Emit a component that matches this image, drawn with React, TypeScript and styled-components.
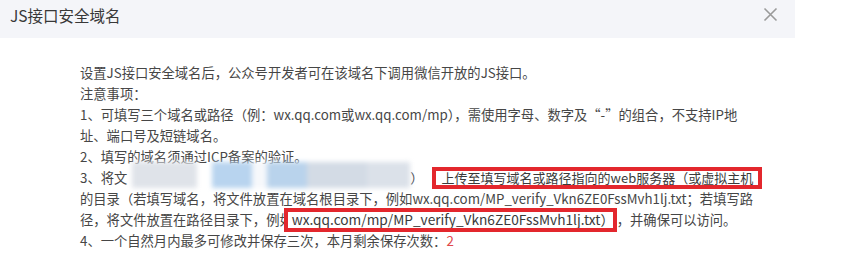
import {FC} from 'react';
import styled, {createGlobalStyle} from 'styled-components';

const GlobalStyle = createGlobalStyle`
	body {
		margin: 0;
		background: #fff;
		font-family: "Noto Sans CJK SC", "Noto Sans", sans-serif;
		color: #464646;
	}
`;

interface BoxProps {
	$width: number;
	$height: number;
	$size: number;
	$pad: number;
	$shift: number;
}

interface BlobProps {
	$w: number;
	$color: string;
}

const noticeLines = [
	'设置JS接口安全域名后，公众号开发者可在该域名下调用微信开放的JS接口。',
	'注意事项：',
	'1、可填写三个域名或路径（例：wx.qq.com或wx.qq.com/mp），需使用字母、数字及“-”的组合，不支持IP地',
	'址、端口号及短链域名。',
	'2、填写的域名须通过ICP备案的验证。',
];

// blurred filename area of item 3 (masked in the original screenshot)
const blobs = [
	{w: 5, color: 'transparent'},
	{w: 65, color: '#dfe3e9'},
	{w: 15, color: 'transparent'},
	{w: 40, color: '#b8d4ef'},
	{w: 15, color: '#f6f8fb'},
	{w: 40, color: '#b9d3ec'},
	{w: 60, color: '#d3dbe5'},
	{w: 43, color: '#dbe1e9'},
];

const App: FC = () => {
	return (
		<>
			<GlobalStyle />
			<Dialog>
				<Header>
					<Title>JS接口安全域名</Title>
					<CloseButton aria-label="关闭">
						<svg width="15" height="15" viewBox="0 0 15 15">
							<path
								d="M1.5 1.5 L13.5 13.5 M13.5 1.5 L1.5 13.5"
								stroke="#9a9a9a"
								strokeWidth="1.6"
								fill="none"
							/>
						</svg>
					</CloseButton>
				</Header>
				<Body>
					{noticeLines.map((line) => (
						<Line key={line}>{line}</Line>
					))}
					<Line>
						3、将文
						<BlurPatch>
							{blobs.map((b, i) => (
								<Blob key={i} $w={b.w} $color={b.color} />
							))}
						</BlurPatch>
						）
						<MarkBox $width={330} $height={22} $size={13} $pad={6} $shift={8}>
							上传至填写域名或路径指向的web服务器（或虚拟主机
						</MarkBox>
					</Line>
					<Line>
						的目录（若填写域名，将文件放置在域名根目录下，例如wx.qq.com/MP_verify_Vkn6ZE0FssMvh1lj.txt；若填写路
					</Line>
					<Line>
						径，将文件放置在路径目录下，例如
						<MarkBox $width={333} $height={24} $size={13.7} $pad={4} $shift={-9}>
							wx.qq.com/mp/MP_verify_Vkn6ZE0FssMvh1lj.txt）
						</MarkBox>
						，并确保可以访问。
					</Line>
					<Line>
						4、一个自然月内最多可修改并保存三次，本月剩余保存次数：<Count>2</Count>
					</Line>
				</Body>
			</Dialog>
		</>
	);
};

const Dialog = styled.div`
	width: 858px;
	height: 262px;
	overflow: hidden;
`;

const Header = styled.div`
	width: 795px;
	height: 38px;
	box-sizing: border-box;
	padding: 4px 17px 0 10px;
	display: flex;
	justify-content: space-between;
	align-items: flex-start;
	background: #f4f5f9;
`;

const Title = styled.div`
	font-size: 15.5px;
	line-height: 22px;
	color: #383838;
`;

const CloseButton = styled.div`
	width: 15px;
	height: 15px;
	margin-top: 3px;
	display: flex;
	cursor: pointer;
`;

const Body = styled.div`
	padding: 24px 0 0 80px;
	display: flex;
	flex-direction: column;
`;

const Line = styled.div`
	font-size: 13.3px;
	line-height: 21px;
	height: 21px;
	white-space: nowrap;
	display: flex;
	align-items: center;
`;

const BlurPatch = styled.span`
	display: inline-flex;
	width: 283px;
	height: 26px;
	margin-top: -6px;
	filter: blur(2.5px);
`;

const Blob = styled.span<BlobProps>`
	width: ${(p) => p.$w}px;
	height: 100%;
	background: ${(p) => p.$color};
	flex-shrink: 0;
`;

const MarkBox = styled.span<BoxProps>`
	display: inline-flex;
	align-items: center;
	box-sizing: border-box;
	width: ${(p) => p.$width}px;
	height: ${(p) => p.$height}px;
	margin-left: ${(p) => p.$shift}px;
	padding-left: ${(p) => p.$pad}px;
	border: 4px solid #e3272d;
	background: #fff;
	font-size: ${(p) => p.$size}px;
	color: #3a3a3a;
	overflow: hidden;
	flex-shrink: 0;
	position: relative;
`;

const Count = styled.span`
	color: #e0494c;
`;

export default App;
